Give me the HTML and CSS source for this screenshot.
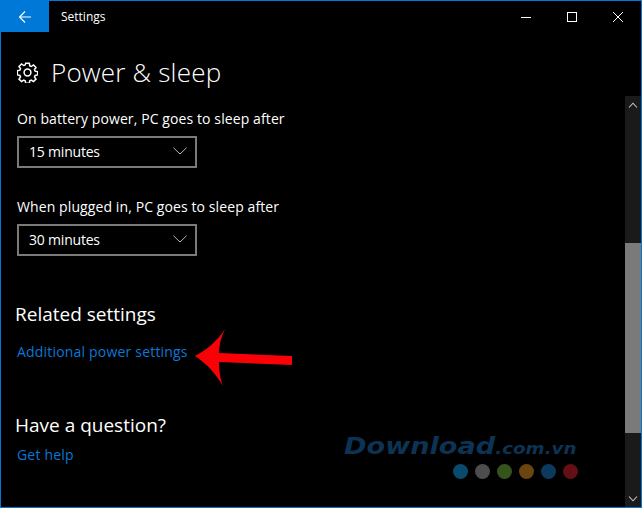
FILE: index.html
```html
<!DOCTYPE html>
<html lang="en">
<head>
<meta charset="utf-8">
<title>Settings</title>
<link rel="stylesheet" href="styles.css">
</head>
<body>
<div class="window">
  <header class="titlebar">
    <button class="back" aria-label="Back">
      <svg width="14" height="14" viewBox="0 0 14 14"><path d="M13 7H1.500M7 1.500L1.500 7L7 12.500" fill="none" stroke="#fff" stroke-width="1.1"/></svg>
    </button>
    <span class="app-name">Settings</span>
    <div class="controls">
      <span class="ctl"><svg width="12" height="12" viewBox="0 0 12 12"><path d="M1 6.500H11" stroke="#fff" fill="none"/></svg></span>
      <span class="ctl"><svg width="12" height="12" viewBox="0 0 12 12"><rect x="1.500" y="1.500" width="9" height="9" stroke="#fff" fill="none"/></svg></span>
      <span class="ctl"><svg width="12" height="12" viewBox="0 0 12 12"><path d="M1 1L11 11M11 1L1 11" stroke="#fff" fill="none"/></svg></span>
    </div>
  </header>
  <div class="page-head">
    <svg class="gear" width="21" height="21" viewBox="0 0 21 21"><g fill="none" stroke="#fff" stroke-width="1.5"><circle cx="10.500" cy="10.500" r="3.400"/><path d="M8.700 1.300h3.600l.5 2.600 1.500.6 2.200-1.500 2.500 2.500-1.500 2.200.6 1.500 2.600.5v3.200l-2.600.5-.6 1.500 1.500 2.200-2.500 2.500-2.200-1.500-1.500.6-.5 2.600H8.700l-.5-2.600-1.500-.6-2.200 1.500-2.500-2.500 1.500-2.200-.6-1.500-2.600-.5V8.700l2.600-.5.6-1.500-1.500-2.200 2.500-2.500 2.200 1.500 1.500-.6z"/></g></svg>
    <h1>Power &amp; sleep</h1>
  </div>
  <div class="body">
    <main class="content">
      <section class="field">
        <label>On battery power, PC goes to sleep after</label>
        <div class="select"><span>15 minutes</span><svg width="14" height="8" viewBox="0 0 14 8"><path d="M.5.8L7 7l6.500-6.200" fill="none" stroke="#b8b8b8"/></svg></div>
      </section>
      <section class="field">
        <label>When plugged in, PC goes to sleep after</label>
        <div class="select"><span>30 minutes</span><svg width="14" height="8" viewBox="0 0 14 8"><path d="M.5.8L7 7l6.500-6.200" fill="none" stroke="#b8b8b8"/></svg></div>
      </section>
      <h2 class="related">Related settings</h2>
      <a class="link" href="#">Additional power settings</a>
      <h2 class="question">Have a question?</h2>
      <a class="link" href="#">Get help</a>
    </main>
    <div class="scrollbar">
      <span class="sb-btn"><svg width="10" height="6" viewBox="0 0 10 6"><path d="M1 5.500L5 1.200L9 5.500" fill="none" stroke="#c8c8c8" stroke-width="1.1"/></svg></span>
      <div class="track"><div class="thumb"></div></div>
      <span class="sb-btn"><svg width="10" height="6" viewBox="0 0 10 6"><path d="M1 .5L5 4.800L9 .5" fill="none" stroke="#c8c8c8" stroke-width="1.1"/></svg></span>
    </div>
  </div>
  <svg class="arrow" width="100" height="60" viewBox="0 0 100 60"><path d="M1 29C13 23 24 13 31 2C27 10 25 18 25 26L98 29V38L25 35C25 44 26 51 29 59C22 47 13 37 1 29Z" fill="#fb0007"/></svg>
  <div class="watermark">
    <div class="wm-text"><b>Download</b><i>.com.vn</i></div>
    <div class="dots"><span class="d1"></span><span class="d2"></span><span class="d3"></span><span class="d4"></span><span class="d5"></span><span class="d6"></span></div>
  </div>
</div>
</body>
</html>
```
FILE: styles.css
```css
* { box-sizing: border-box; }
html, body { margin: 0; height: 100%; background: #000; }
.window {
  position: relative;
  width: 642px; height: 508px;
  border: 1px solid #0078d7;
  background: #000; color: #fff;
  font-family: "Open Sans", "Noto Sans", sans-serif;
  display: flex; flex-direction: column;
  overflow: hidden;
}
.titlebar { display: flex; align-items: center; height: 31px; flex: none; }
.back {
  width: 48px; height: 31px; border: 0; padding: 0; background: #0078d7;
  display: flex; align-items: center; justify-content: center;
}
.app-name { font-size: 12px; margin-left: 12px; }
.controls { margin-left: auto; display: flex; }
.ctl { width: 46px; height: 31px; display: flex; align-items: center; justify-content: center; }
.page-head { display: flex; align-items: center; height: 64px; flex: none; padding: 16px 0 0 16px; }
.gear { flex: none; }
h1 { font-size: 26px; font-weight: 300; margin: 0 0 0 13px; line-height: 36px; letter-spacing: .2px; }
.body { flex: 1; display: flex; min-height: 0; }
.content { flex: 1; padding: 13px 0 0 16px; }
.field { display: flex; flex-direction: column; align-items: flex-start; margin-bottom: 29px; }
.field label { font-size: 14px; line-height: 20px; margin-bottom: 7px; letter-spacing: .1px; }
.select {
  width: 180px; height: 32px; border: 2px solid #7a7a7a;
  display: flex; align-items: center; justify-content: space-between;
  padding: 0 8px 2px 10px; font-size: 14px; letter-spacing: -.2px;
}
h2 { font-size: 19px; font-weight: 400; margin: 0 0 0 -2px; line-height: 26px; }
.related { margin-top: 45px; }
.question { margin-top: 50px; }
.link { display: block; color: #0a78d7; text-decoration: none; font-size: 14px; line-height: 20px; margin-top: 15px; letter-spacing: .19px; }
.question + .link { margin-top: 7px; }
.scrollbar { width: 16px; flex: none; background: #1a1a1a; display: flex; flex-direction: column; }
.sb-btn { height: 17px; flex: none; display: flex; align-items: center; justify-content: center; }
.track { flex: 1; padding-top: 130px; }
.thumb { height: 190px; background: #7a7a7a; }
.arrow { position: absolute; left: 193px; top: 326px; }
.watermark { position: absolute; left: 343px; top: 431px; width: 234px; }
.wm-text { color: #0c3353; font-style: italic; line-height: 28px; font-family: "DejaVu Sans", sans-serif; white-space: nowrap; transform: scaleX(1.18); transform-origin: left center; }
.wm-text b { font-size: 23px; font-weight: 700; }
.wm-text i { font-size: 15.5px; font-weight: 700; }
.dots { display: flex; justify-content: flex-end; gap: 7px; margin-top: 1px; }
.dots span { width: 15px; height: 15px; border-radius: 50%; }
.d1 { background: #0a4a6c; }
.d2 { background: #4d4d4d; }
.d3 { background: #37531c; }
.d4 { background: #6a4510; }
.d5 { background: #0c3a5e; }
.d6 { background: #621015; }
```
